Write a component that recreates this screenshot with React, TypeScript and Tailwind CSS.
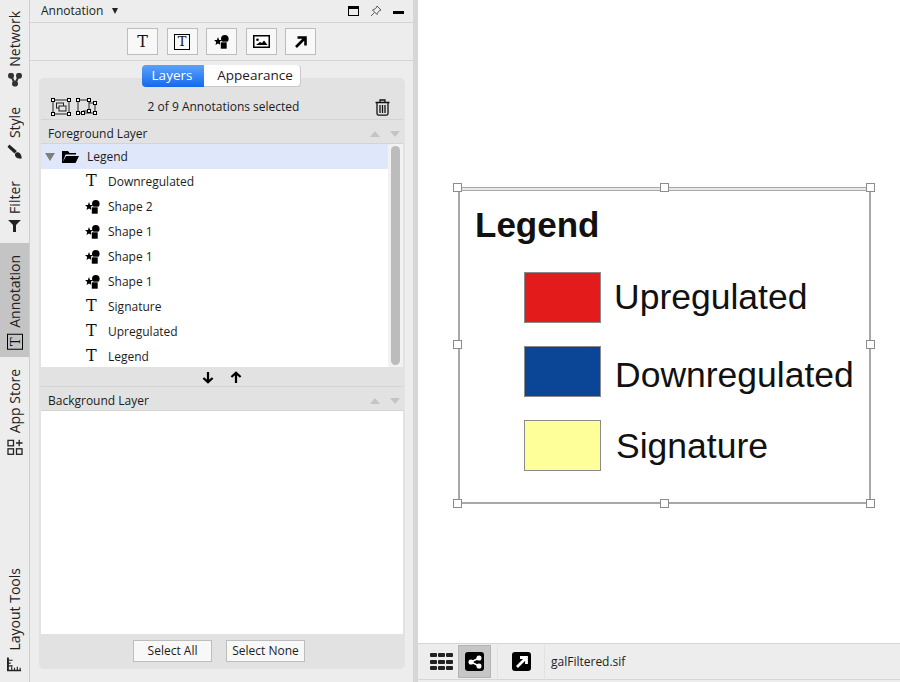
import { ReactNode } from 'react'

function TextIcon({ size = 'text-[16px]' }: { size?: string }) {
    return <span className={`font-['DejaVu_Serif',serif] ${size} leading-none text-[#111] [writing-mode:horizontal-tb]`}>T</span>
}

function BoxedTextIcon() {
    return (
        <span className="flex h-[16px] w-[16px] items-center justify-center border border-black [writing-mode:horizontal-tb]">
            <TextIcon size="text-[13px]" />
        </span>
    )
}

function ShapeIcon() {
    return (
        <svg viewBox="0 0 15 14" className="h-[14px] w-[15px]">
            <polygon fill="#000" points="4,2 5.1,4.9 8,5.1 5.8,7 6.5,10 4,8.4 1.5,10 2.2,7 0,5.1 2.9,4.9" />
            <circle cx="10.8" cy="3.8" r="3.8" fill="#000" />
            <rect x="6.5" y="7" width="6.5" height="7" fill="#000" stroke="#fff" strokeWidth="0.6" />
        </svg>
    )
}

function ImageIcon() {
    return (
        <svg viewBox="0 0 17 13" className="h-[13px] w-[17px]">
            <rect x="0.75" y="0.75" width="15.5" height="11.5" fill="#fff" stroke="#000" strokeWidth="1.5" />
            <path d="M3 10 L7 7 L9 8 L11 5.5 L14.5 10 Z" fill="#000" />
            <circle cx="4.5" cy="4.8" r="1.3" fill="#000" />
        </svg>
    )
}

function ArrowIcon() {
    return (
        <svg viewBox="0 0 12 12" className="h-[12px] w-[12px]" fill="none" stroke="#000" strokeWidth="2.6">
            <path d="M1 11 L10 2 M2.5 1.5 H10.5 V9.5" />
        </svg>
    )
}

function GroupIcon() {
    return (
        <svg viewBox="0 0 20 18" className="h-[18px] w-[20px]" fill="none" stroke="#222">
            <rect x="2" y="2" width="16" height="14" />
            <rect x="5.5" y="5" width="7" height="5" />
            <rect x="8" y="8" width="7" height="5" fill="#e2e2e2" />
            {[[2, 2], [18, 2], [2, 16], [18, 16]].map(([x, y]) => (
                <rect key={`${x}-${y}`} x={x - 1.5} y={y - 1.5} width="3" height="3" fill="#fff" stroke="#000" />
            ))}
        </svg>
    )
}

function UngroupIcon() {
    return (
        <svg viewBox="0 0 22 18" className="h-[18px] w-[22px]" fill="none" stroke="#222">
            <path d="M3 2 H14 V13 H8 V15 H3 Z M14 5 H20 V15 H8" />
            {[[3, 2], [14, 2], [3, 15], [20, 5], [20, 15], [8, 15], [14, 13]].map(([x, y]) => (
                <rect key={`${x}-${y}`} x={x - 1.5} y={y - 1.5} width="3" height="3" fill="#fff" stroke="#000" />
            ))}
        </svg>
    )
}

function TrashIcon() {
    return (
        <svg viewBox="0 0 15 17" className="h-[17px] w-[15px]" fill="none" stroke="#111" strokeWidth="1.3">
            <path d="M0.5 3.5 H14.5 M5 3.5 V1 H10 V3.5" />
            <path d="M2 3.5 V14.5 Q2 16.2 3.7 16.2 H11.3 Q13 16.2 13 14.5 V3.5" />
            <path d="M5 6 V14 M7.5 6 V14 M10 6 V14" />
        </svg>
    )
}

function NetworkIcon() {
    return (
        <svg viewBox="0 0 14 14" className="h-[14px] w-[14px] rotate-90" fill="#333" stroke="#333" strokeWidth="2">
            <path d="M3 3 L7 11 L11 3" fill="none" />
            <circle cx="3" cy="3" r="2" />
            <circle cx="11" cy="3" r="2" />
            <circle cx="7" cy="11" r="2" />
        </svg>
    )
}

function BrushIcon() {
    return (
        <svg viewBox="0 0 16 16" className="h-[15px] w-[15px]" fill="#222">
            <path d="M0.5 15.5 C0 11 2 8.5 4.5 8.5 C7 8.5 8 10.5 7 12.5 C6 14.5 3 16 0.5 15.5 Z" />
            <path d="M6 8 L13 0.5 L15.5 2.5 L8.5 10.5 Z" />
        </svg>
    )
}

function FunnelIcon() {
    return (
        <svg viewBox="0 0 13 12" className="h-[12px] w-[13px] rotate-90" fill="#222">
            <path d="M0 0 H13 L8 5 V12 H5 V5 Z" />
        </svg>
    )
}

function AppsIcon() {
    return (
        <svg viewBox="0 0 16 16" className="h-[16px] w-[16px] rotate-90" fill="none" stroke="#222" strokeWidth="1.3">
            <rect x="1" y="1" width="5.5" height="5.5" />
            <rect x="1" y="9.5" width="5.5" height="5.5" />
            <rect x="9.5" y="9.5" width="5.5" height="5.5" />
            <path d="M12.2 0.5 V7 M9 3.7 H15.5" />
        </svg>
    )
}

function RulerIcon() {
    return (
        <svg viewBox="0 0 16 16" className="h-[15px] w-[15px] rotate-90" fill="none" stroke="#222" strokeWidth="1.5">
            <path d="M1 1 V15 H15" strokeWidth="2" />
            <path d="M1 4 H6 M1 7 H4 M1 10 H6 M5 15 V11 M8 15 V12 M11 15 V11 M14 15 V12" strokeWidth="1.2" />
        </svg>
    )
}

function Tab({ icon, label, height, active }: { icon: ReactNode; label: string; height: string; active?: boolean }) {
    return (
        <div className={`flex w-[29px] shrink-0 items-start justify-center ${height} ${active ? 'bg-[#c4c4c4]' : ''}`}>
            <div className="flex rotate-180 items-center gap-[6px] text-[14px] leading-none text-[#222] [writing-mode:vertical-rl]">
                <span className="flex rotate-90 items-center justify-center">{icon}</span>
                <span>{label}</span>
            </div>
        </div>
    )
}

function ToolButton({ children }: { children: ReactNode }) {
    return (
        <div className="flex h-[27px] w-[31px] items-center justify-center border border-[#bdbdbd] bg-[#f8f8f8]">
            {children}
        </div>
    )
}

function LayerHeader({ label }: { label: string }) {
    return (
        <div className="flex h-[24px] shrink-0 items-center justify-between border-b border-[#d4d4d4] pl-[7px] pr-[3px] pt-[4px]">
            <span>{label}</span>
            <span className="flex items-center gap-[10px]">
                <span className="h-0 w-0 border-x-[5.5px] border-b-[6px] border-x-transparent border-b-[#c4c4c4]" />
                <span className="h-0 w-0 border-x-[5.5px] border-t-[6px] border-x-transparent border-t-[#c4c4c4]" />
            </span>
        </div>
    )
}

const rows = [
    { label: 'Downregulated', kind: 'text' },
    { label: 'Shape 2', kind: 'shape' },
    { label: 'Shape 1', kind: 'shape' },
    { label: 'Shape 1', kind: 'shape' },
    { label: 'Shape 1', kind: 'shape' },
    { label: 'Signature', kind: 'text' },
    { label: 'Upregulated', kind: 'text' },
    { label: 'Legend', kind: 'text' },
]

function Handle({ className }: { className: string }) {
    return <div className={`absolute h-[9px] w-[9px] border border-[#8c8c8c] bg-white ${className}`} />
}

function LegendRow({ color, label, top, textPos }: { color: string; label: string; top: string; textPos: string }) {
    return (
        <>
            <div className={`absolute left-[66px] h-[51px] w-[77px] border border-[#8a8a8a] ${top} ${color}`} />
            <div className={`absolute text-[35.5px] leading-none text-[#111] ${textPos}`}>{label}</div>
        </>
    )
}

export default function App() {
    return (
        <div className="flex h-[682px] w-[900px] overflow-hidden bg-[#ededed] font-['Open_Sans',sans-serif] text-[12px] text-[#1c1c1c]">
            {/* side tabs */}
            <div className="flex w-[30px] shrink-0 flex-col border-r border-[#cfcfcf] pb-[2px]">
                <Tab height="h-[95px] pt-[11px]" label="Network" icon={<NetworkIcon />} />
                <Tab height="h-[73px] pt-[12px]" label="Style" icon={<BrushIcon />} />
                <Tab height="h-[75px] pt-[13px]" label="Filter" icon={<FunnelIcon />} />
                <Tab height="h-[114px] pt-[12px]" label="Annotation" active icon={<BoxedTextIcon />} />
                <Tab height="h-[100px] pt-[12px]" label="App Store" icon={<AppsIcon />} />
                <div className="flex-1" />
                <Tab height="h-[112px]" label="Layout Tools" icon={<RulerIcon />} />
            </div>

            {/* control panel */}
            <div className="flex w-[383px] shrink-0 flex-col">
                <div className="flex h-[23px] shrink-0 items-center justify-between border-b border-[#d4d4d4] pl-[11px] pr-[9px]">
                    <div className="flex items-center gap-[9px] text-[12px]">
                        <span>Annotation</span>
                        <span className="h-0 w-0 border-x-[3.5px] border-t-[6px] border-x-transparent border-t-[#222]" />
                    </div>
                    <div className="flex items-center gap-[11px]">
                        <span className="h-[10px] w-[11px] border border-t-[3px] border-black" />
                        <svg viewBox="0 0 12 12" className="h-[12px] w-[12px]" fill="none" stroke="#333" strokeWidth="0.8">
                            <path d="M7 1 L11 5 L9.5 5.5 L7.5 8 L7 9.5 L2.5 5 L4 4.5 L6.5 2.5 Z M4.5 7.5 L1 11" />
                        </svg>
                        <span className="mt-[3px] h-[3px] w-[11px] bg-black" />
                    </div>
                </div>
                <div className="flex h-[38px] shrink-0 items-center justify-center gap-[8.5px] border-b border-[#d4d4d4]">
                    <ToolButton><TextIcon /></ToolButton>
                    <ToolButton><BoxedTextIcon /></ToolButton>
                    <ToolButton><ShapeIcon /></ToolButton>
                    <ToolButton><ImageIcon /></ToolButton>
                    <ToolButton><ArrowIcon /></ToolButton>
                </div>

                <div className="relative z-10 mt-[4px] flex h-[22px] shrink-0 justify-center text-[13.5px] leading-none">
                    <div className="flex h-[22px] w-[62px] items-center justify-center rounded-l-[4px] bg-gradient-to-b from-[#5aa2f8] to-[#1268ee] pr-[2px] text-white">Layers</div>
                    <div className="flex h-[22px] w-[97px] items-center justify-center rounded-r-[4px] border-b border-r border-[#c8c8c8] bg-white pl-[6px]">Appearance</div>
                </div>

                <div className="mx-[9px] mt-[-9px] flex h-[591px] w-[366px] shrink-0 flex-col rounded-[5px] bg-[#e2e2e2] px-[2px]">
                    <div className="flex h-[42px] shrink-0 items-center border-b border-[#d4d4d4] pl-[10px] pr-[13px] pt-[17px]">
                        <div className="flex flex-1 items-center gap-[4px]">
                            <GroupIcon />
                            <UngroupIcon />
                        </div>
                        <span className="ml-[6px]">2 of 9 Annotations selected</span>
                        <div className="flex flex-1 justify-end">
                            <TrashIcon />
                        </div>
                    </div>
                    <LayerHeader label="Foreground Layer" />

                    <div className="flex h-[223px] shrink-0 bg-white">
                        <div className="flex-1">
                            <div className="flex h-[25px] items-center bg-[#dfe7fb]">
                                <span className="ml-[4px] h-0 w-0 border-x-[5px] border-t-[8px] border-x-transparent border-t-[#7f7f7f]" />
                                <svg viewBox="0 0 17 13" className="ml-[7px] h-[13px] w-[17px]" fill="#000">
                                    <path d="M0 13 V1 H6 L7.5 3 H14 V4.5 H3.5 L0.8 12 L4 6 H17 L13.5 13 Z" />
                                </svg>
                                <span className="ml-[8px]">Legend</span>
                            </div>
                            {rows.map((row, idx) => (
                                <div key={idx} className="flex h-[25px] items-center">
                                    <span className="flex w-[67px] justify-end">
                                        <span className="flex w-[23px] justify-start">
                                            {row.kind === 'text' ? <span className="ml-[1px]"><TextIcon /></span> : <ShapeIcon />}
                                        </span>
                                    </span>
                                    <span>{row.label}</span>
                                </div>
                            ))}
                        </div>
                        <div className="w-[15px] bg-[#f2f2f2] px-[3px] py-[2px]">
                            <div className="h-full rounded-full bg-[#bcbcbc]" />
                        </div>
                    </div>

                    <div className="flex h-[20px] shrink-0 items-center justify-center gap-[14px] border-b border-[#d4d4d4] pt-[1px]">
                        <svg viewBox="0 0 14 14" className="h-[13px] w-[14px]" fill="none" stroke="#000" strokeWidth="2.4">
                            <path d="M7 1 V12 M2 7.5 L7 12 L12 7.5" />
                        </svg>
                        <svg viewBox="0 0 14 14" className="h-[13px] w-[14px]" fill="none" stroke="#000" strokeWidth="2.4">
                            <path d="M7 13 V2 M2 6.5 L7 2 L12 6.5" />
                        </svg>
                    </div>
                    <LayerHeader label="Background Layer" />
                    <div className="h-[223px] shrink-0 bg-white" />

                    <div className="flex flex-1 items-start justify-center gap-[14px] pr-[6px] pt-[6px]">
                        <div className="flex h-[22px] w-[79px] items-center justify-center border border-[#bdbdbd] bg-[#f8f8f8]">Select All</div>
                        <div className="flex h-[22px] w-[79px] items-center justify-center border border-[#bdbdbd] bg-[#f8f8f8]">Select None</div>
                    </div>
                </div>
            </div>

            {/* splitter */}
            <div className="w-[5px] shrink-0 bg-[#d6d6d6]" />

            {/* network view */}
            <div className="flex flex-1 flex-col bg-white">
                <div className="relative flex-1">
                    <div className="absolute left-[40px] top-[187px] h-[317px] w-[413px] font-['Liberation_Sans',sans-serif]">
                        <div className="absolute inset-x-0 top-0 h-[4px] border-y border-[#a8a8a8] bg-[#e8e8e8]" />
                        <div className="absolute inset-y-0 left-0 w-[2px] bg-[#a8a8a8]" />
                        <div className="absolute inset-y-0 right-0 w-[2px] bg-[#a8a8a8]" />
                        <div className="absolute inset-x-0 bottom-0 h-[2px] bg-[#a8a8a8]" />

                        <Handle className="left-[-5px] top-[-4px]" />
                        <Handle className="left-[202px] top-[-4px]" />
                        <Handle className="right-[-4px] top-[-4px]" />
                        <Handle className="left-[-5px] top-[153px]" />
                        <Handle className="right-[-4px] top-[153px]" />
                        <Handle className="bottom-[-4px] left-[-5px]" />
                        <Handle className="bottom-[-4px] left-[202px]" />
                        <Handle className="bottom-[-4px] right-[-4px]" />

                        <div className="absolute left-[17px] top-[20px] text-[35px] font-bold leading-none text-[#111]">Legend</div>
                        <LegendRow color="bg-[#e31b1b]" label="Upregulated" top="top-[85px]" textPos="left-[156px] top-[93px]" />
                        <LegendRow color="bg-[#0b4596]" label="Downregulated" top="top-[159px]" textPos="left-[157px] top-[171px]" />
                        <LegendRow color="bg-[#ffff99]" label="Signature" top="top-[233px]" textPos="left-[158px] top-[242px]" />
                    </div>
                </div>
                <div className="flex h-[37px] shrink-0 items-center border-y border-[#d6d6d6] bg-[#ededed] pl-[12px]">
                    <div className="grid w-[23px] grid-cols-3 gap-x-[1px] gap-y-[2.5px]">
                        {Array.from({ length: 9 }).map((_, i) => (
                            <span key={i} className="h-[4px] rounded-[1px] bg-[#222]" />
                        ))}
                    </div>
                    <div className="ml-[5px] flex h-[33px] w-[33px] items-center justify-center border border-[#b4b4b4] bg-[#c6c6c6]">
                        <span className="flex h-[19px] w-[19px] items-center justify-center rounded-[3px] bg-black">
                            <svg viewBox="0 0 14 14" className="h-[14px] w-[14px]" fill="#fff" stroke="#fff" strokeWidth="1.5">
                                <path d="M11 3 L3 7 L11 11" fill="none" />
                                <circle cx="3" cy="7" r="1.8" />
                                <circle cx="11" cy="3" r="1.8" />
                                <circle cx="11" cy="11" r="1.8" />
                            </svg>
                        </span>
                    </div>
                    <div className="ml-[6px] h-[33px] border-l border-[#e2e2e2]" />
                    <span className="ml-[14px] flex h-[19px] w-[19px] items-center justify-center rounded-[3px] bg-black">
                        <svg viewBox="0 0 14 14" className="h-[14px] w-[14px]" fill="none" stroke="#fff" strokeWidth="2.8">
                            <path d="M2 12 L11 3 M5 2.5 H11.5 V9" />
                        </svg>
                    </span>
                    <div className="ml-[13px] h-[33px] border-l border-[#e2e2e2]" />
                    <span className="ml-[6px]">galFiltered.sif</span>
                </div>
                <div className="h-[2px] shrink-0 bg-[#ededed]" />
            </div>
        </div>
    )
}
